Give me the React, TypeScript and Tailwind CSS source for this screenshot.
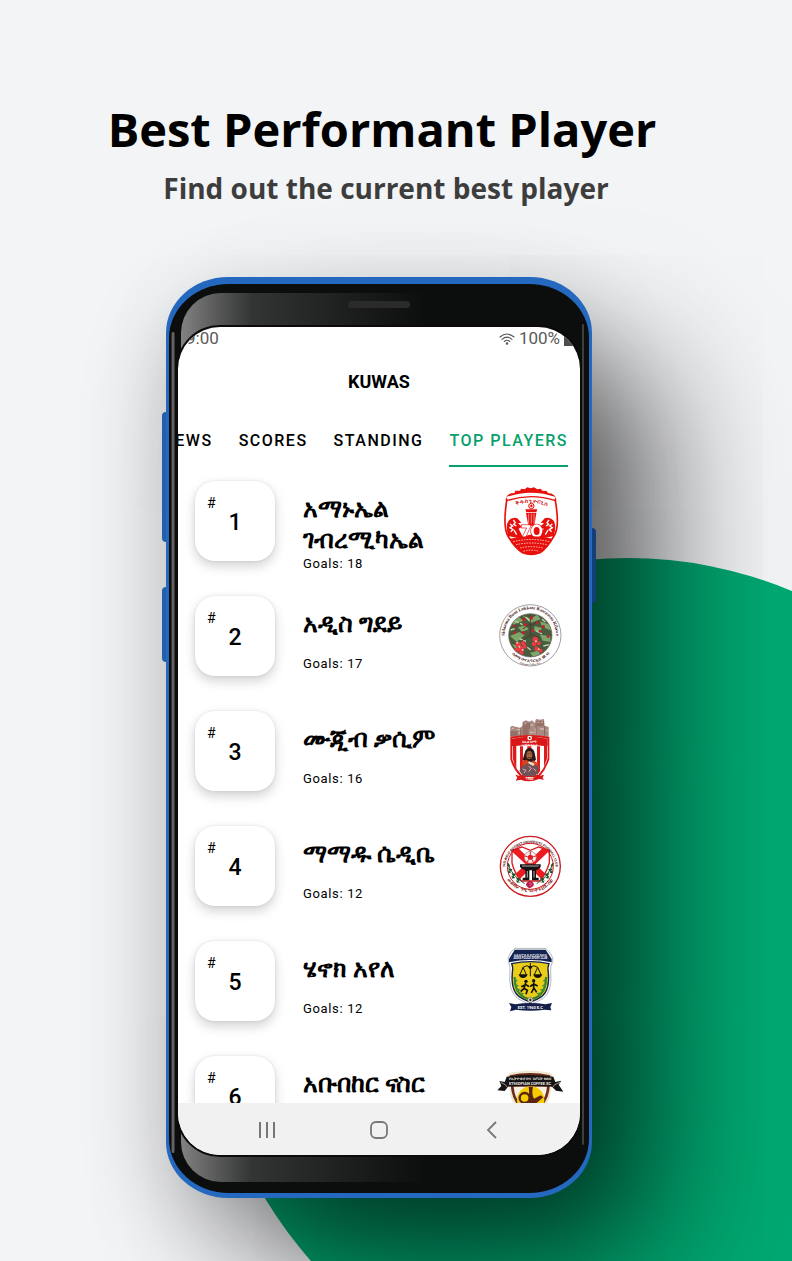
import type { ReactNode } from "react";

type Player = { rank: number; name: string; goals: number; crest: ReactNode };

function GiorgisCrest() {
  return (
    <svg viewBox="24 33 192 216" className="h-[72px] w-16" role="img" aria-label="Club crest">
      <path d="M50 80 Q48 68 60 62 Q123 48 185 62 Q198 68 196 80 Q210 160 192 186 Q170 224 150 236 Q123 246 98 236 Q74 222 54 186 Q38 160 50 80Z" fill="#fff" stroke="#e8100c" strokeWidth="5" />
      <path d="M50 73 L64 58 L72 60 L76 50 L90 50 L94 44 L104 46 L112 40 L122 43 L132 40 L142 46 L152 44 L157 50 L170 51 L176 60 L184 59 L196 73 Q123 48 50 73Z" fill="#e8100c" />
      <path d="M50 72 Q123 46 196 72" fill="none" stroke="#fff" strokeWidth="6" />
      <path d="M50 80 Q123 56 196 80" fill="none" stroke="#e8100c" strokeWidth="4" />
      <path id="giorgis-arc" d="M62 102 Q123 70 188 104" fill="none" />
      <text fill="#d01010" fontSize="17" fontWeight="700" fontFamily="Noto Sans, sans-serif">
        <textPath href="#giorgis-arc" startOffset="50%" textAnchor="middle">ቅዱስ ጊዮርጊስ</textPath>
      </text>
      <circle cx="124" cy="96" r="8" fill="#fff" stroke="#e8100c" strokeWidth="3" />
      <path d="M124 91 l4 4 -2 5 h-4 l-2 -5z" fill="#e8100c" />
      <path d="M106 106 h36 l-3 9 h-30z M108 117 h31 l-6 38 h-18z" fill="#e8100c" />
      <path d="M116 119 v30 M124 119 v30 M132 119 v30" stroke="#fff" strokeWidth="1.5" />
      <path d="M54 186 Q46 152 56 140 Q66 128 82 133 L94 146 L84 148 L96 158 L86 164 L102 196 Z M192 186 Q200 152 191 140 Q180 128 164 133 L152 146 L162 148 L150 158 L161 164 L146 196Z" fill="#e8100c" />
      <path d="M60 150 l8 6 -8 5 9 6 -7 6 M70 138 l6 8 -5 5 8 5 M187 150 l-8 6 8 5 -9 6 7 6 M177 138 l-6 8 5 5 -8 5 M72 168 l8 14 M174 168 l-8 14" fill="none" stroke="#fff" strokeWidth="4" />
      <path d="M92 196 Q124 168 156 196Z" fill="#e8100c" />
      <path d="M94 152 H121 V160 L107 190 H96 L110 162 H94Z" fill="#fff" stroke="#e8100c" strokeWidth="2" />
      <ellipse cx="140" cy="171" rx="13" ry="16" fill="none" stroke="#e8100c" strokeWidth="12" />
      <ellipse cx="140" cy="171" rx="13" ry="16" fill="#e8100c" stroke="#fff" strokeWidth="8" />
      <path d="M60 194 Q123 180 188 194 Q176 216 150 236 Q123 246 98 236 Q72 218 60 194Z" fill="#e8100c" />
      <path d="M70 203 Q123 190 178 203 M78 212 Q123 202 170 212 M90 222 Q123 214 158 222 M100 232 Q123 225 148 232" fill="none" stroke="#fff" strokeWidth="2" strokeDasharray="5 3" />
    </svg>
  );
}

function SidamaCrest() {
  return (
    <svg viewBox="24 18 192 216" className="h-[72px] w-16" role="img" aria-label="Club crest">
      <defs>
        <clipPath id="sidama-clip"><circle cx="121" cy="124" r="65" /></clipPath>
        <path id="sidama-top" d="M46 140 A77 77 0 1 1 196 140" />
        <path id="sidama-bottom" d="M43 138 A79 79 0 0 0 199 138" />
        <path id="sidama-low" d="M63 193 A90 90 0 0 0 179 193" />
      </defs>
      <circle cx="121" cy="124" r="92" fill="#fff" stroke="#8d8d8d" strokeWidth="2.5" />
      <g clipPath="url(#sidama-clip)">
        <rect x="50" y="55" width="142" height="142" fill="#4a5a3e" />
        <path d="M58 82 l28 -14 14 12 -30 12z M96 64 l26 10 20 -12 10 14 -30 10z M150 82 l30 10 4 18 -28 -12z M60 126 l28 -12 16 10 -24 20z M150 122 l30 4 2 18 -24 -4z M84 100 l22 -6 10 12 -20 8z M134 96 l22 6 -8 14 -16 -6z M120 176 l24 -6 8 14 -20 8z M66 150 l20 6 -10 8z" fill="#7fa66a" />
        <path d="M68 78 l18 8 M108 70 l12 12 M138 110 l18 10 M88 134 l20 8 M160 156 l18 -4 M62 108 l12 -4 M156 76 l10 8 M112 160 l10 8 M162 176 l8 -8 M90 88 l8 4" stroke="#bcd6ae" strokeWidth="4" />
        <path d="M121 62 v70 M121 90 l-22 14 M121 96 l26 -14 M121 120 l28 12 M118 124 l-24 18" stroke="#4a3c2c" strokeWidth="3" fill="none" />
        <g fill="#c4202c">
          <circle cx="102" cy="76" r="5" /><circle cx="124" cy="72" r="5" /><circle cx="106" cy="92" r="5" /><circle cx="142" cy="86" r="4" />
          <circle cx="160" cy="98" r="5" /><circle cx="74" cy="116" r="4" /><circle cx="100" cy="116" r="5" /><circle cx="150" cy="112" r="4" />
          <circle cx="174" cy="128" r="4" /><circle cx="72" cy="96" r="4" /><circle cx="128" cy="110" r="4" />
        </g>
        <g fill="#ec3a44">
          <circle cx="84" cy="152" r="8" /><circle cx="100" cy="148" r="7" /><circle cx="92" cy="164" r="8" /><circle cx="80" cy="168" r="7" />
          <circle cx="104" cy="158" r="6" /><circle cx="94" cy="176" r="7" /><circle cx="136" cy="136" r="8" /><circle cx="132" cy="150" r="7" />
          <circle cx="146" cy="148" r="6" /><circle cx="140" cy="164" r="7" /><circle cx="152" cy="170" r="6" />
        </g>
        <g fill="#ffc09c">
          <circle cx="88" cy="158" r="3" /><circle cx="98" cy="168" r="3" /><circle cx="82" cy="146" r="3" /><circle cx="138" cy="142" r="3" /><circle cx="146" cy="166" r="3" />
        </g>
      </g>
      <circle cx="121" cy="124" r="65" fill="none" stroke="#6d6259" strokeWidth="2" />
      <g fontFamily="Liberation Serif, serif" fontWeight="700" fill="#4a1716" textAnchor="middle">
        <text fontSize="14"><textPath href="#sidama-top" startOffset="50%">Sidaama Buni Lokkate Kawaasso Kilawe</textPath></text>
        <text fontSize="13" fontFamily="Noto Sans, sans-serif"><textPath href="#sidama-bottom" startOffset="50%">ሲዳማ ቡና እግር ኳስ ክለብ</textPath></text>
        <text fontSize="8" fill="#6b4a48"><textPath href="#sidama-low" startOffset="50%">Sidama Coffee F.C</textPath></text>
      </g>
    </svg>
  );
}

function FasilCrest() {
  return (
    <svg viewBox="24 18 192 216" className="h-[72px] w-16" role="img" aria-label="Club crest">
      <path d="M61 84 V54 L66 50 L80 54 L90 56 L98 50 V38 L108 34 L118 38 L126 34 L134 42 L138 30 L150 32 L162 30 L164 50 L176 54 V84Z" fill="#a98a82" />
      <path d="M61 66 h22 v16 h-22z M98 42 h18 v36 h-18z M140 36 h22 v16 h-22z" fill="#957068" />
      <path d="M66 58 h6 M82 62 h10 M104 44 h4 M122 48 h8 M144 40 h4 M154 40 h4 M150 60 h12 M168 64 h4 M120 70 h10 M136 56 v20 M86 72 h6" stroke="#d4bbb4" strokeWidth="4" />
      <path d="M92 58 v22 M118 40 v20 M138 46 v30 M164 52 v28" stroke="#6f534e" strokeWidth="2" />
      <path d="M61 84 Q120 72 178 84 V150 Q170 178 148 204 H92 Q68 178 61 150Z" fill="#de1717" />
      <path d="M66 89 Q120 78 173 89 V148 Q166 174 145 198 H95 Q73 174 66 148Z" fill="#fff" />
      <path d="M68 89 h11 v90 l-6 -14 -5 -18z M90 112 h9 v84 l-9 -12z M141 112 h9 v74 l-9 14z M162 89 h9 v60 l-9 24z M112 112 h12 v84 h-12z" fill="#e01b1b" />
      <path d="M66 90 Q120 76 173 90 V112 Q120 106 66 112Z" fill="#d81818" />
      <circle cx="119" cy="87" r="7" fill="#fff" /><circle cx="119" cy="87" r="3" fill="#8c1515" />
      <g fill="#fff" fontFamily="Noto Sans, sans-serif" fontWeight="700" textAnchor="middle">
        <text x="119" y="103" fontSize="11">ፋሲል ከነማ</text>
        <text x="119" y="112" fontSize="9">ስፖርት ክለብ</text>
      </g>
      <path d="M104 132 Q106 118 119 117 Q132 118 134 132 L138 152 L130 160 H108 L98 152Z" fill="#2b1713" />
      <ellipse cx="118" cy="138" rx="9" ry="12" fill="#a4623f" />
      <path d="M112 134 h4 M121 134 h4 M114 145 q5 3 9 0" stroke="#30150f" strokeWidth="2" fill="none" />
      <path d="M97 156 l14 -4 8 14 10 -12 14 8 4 14 -50 2z" fill="#d8451c" />
      <path d="M116 156 l18 8 -8 14 -14 -2z" fill="#f4e0c4" />
      <path d="M94 174 l20 -12 14 8 18 -2 -2 24 -10 10 H100 l-12 -16z" fill="#735257" />
      <path d="M98 180 l10 4 -6 8 M116 172 l8 6 -8 10 M130 178 l8 8" stroke="#cdb0ae" strokeWidth="3" fill="none" />
      <path d="M76 197 L92 202 Q118 210 146 202 L162 197 L158 206 L162 212 L147 210 Q118 222 92 212 L77 215 L82 206Z" fill="#db1818" />
      <text x="119" y="214" textAnchor="middle" fill="#fff" fontSize="10" fontWeight="700" fontFamily="Roboto, sans-serif">1960</text>
    </svg>
  );
}

function WelwaloCrest() {
  return (
    <svg viewBox="24 15 192 216" className="h-[72px] w-16" role="img" aria-label="Club crest">
      <defs>
        <path id="wel-top" d="M45 130 A76 76 0 1 1 197 130" />
        <path id="wel-bottom" d="M40 137 A83 83 0 0 0 202 137" />
        <clipPath id="wel-shield"><path d="M66 76 L96 66 L121 76 L146 66 L178 76 V114 Q168 146 150 168 H94 Q74 146 66 114Z" /></clipPath>
      </defs>
      <circle cx="121" cy="124" r="90" fill="#fff" stroke="#c81a20" strokeWidth="4" />
      <circle cx="121" cy="124" r="69" fill="#fff" stroke="#d9161b" strokeWidth="3" />
      <g clipPath="url(#wel-shield)">
        <path d="M62 62 L186 178 M180 62 L58 178" stroke="#ec1c20" strokeWidth="20" />
      </g>
      <path d="M66 76 L96 66 L121 76 L146 66 L178 76 V114 Q168 146 150 168 H94 Q74 146 66 114Z" fill="none" stroke="#dd1a1d" strokeWidth="4" />
      <circle cx="121" cy="97" r="18" fill="#f6eeee" stroke="#a3686a" strokeWidth="2" />
      <path d="M121 88 l9 6 -3 10 h-12 l-3 -10z" fill="#df1c20" />
      <path d="M121 80 v8 M104 93 l8 2 M138 93 l-8 2 M112 112 l3 -8 M130 112 l-3 -8" stroke="#df1c20" strokeWidth="3" />
      <path d="M90 118 H152 V126 Q146 134 138 136 V158 H146 V166 H126 V136 H118 V166 H98 V158 H106 V136 Q94 132 90 126Z" fill="#161313" />
      <path d="M112 138 v20 M132 138 v20 M96 123 h50" stroke="#fff" strokeWidth="2" />
      <path d="M54 114 Q62 150 104 176 M188 114 Q180 150 140 176" fill="none" stroke="#28613a" strokeWidth="3" />
      <path d="M50 114 l10 6 -4 8z M54 130 l14 3 -8 8z M54 136 l10 7 -9 2z M64 145 l15 1 -9 10z M64 152 l13 6 -10 3z M78 160 l14 -1 -7 11z M78 166 l13 6 -10 1z M192 114 l-10 6 4 8z M188 130 l-14 3 8 8z M188 136 l-10 7 9 2z M178 145 l-15 1 9 10z M178 152 l-13 6 10 3z M164 160 l-14 -1 7 11z M164 166 l-13 6 10 1z" fill="#23522f" />
      <path d="M112 172 q8 -10 16 0 q8 8 -2 14 q-8 6 -14 -1 q-8 -6 0 -13z" fill="#ba1a46" />
      <path d="M117 175 q5 -4 8 2 q-2 6 -7 4" stroke="#f08aaa" strokeWidth="2" fill="none" />
      <g fontWeight="700" textAnchor="middle">
        <text fontSize="10" fill="#54100f" fontFamily="Roboto, sans-serif"><textPath href="#wel-top" startOffset="50%">WELWALO ADIGRAT UNIVERSITY FOOTBALL CLUB</textPath></text>
        <text fontSize="15" fill="#8f1717" fontFamily="Noto Sans, sans-serif"><textPath href="#wel-bottom" startOffset="50%">ወልዋሎ ዓዲ ግራት ዩኒቨርሲቲ</textPath></text>
      </g>
    </svg>
  );
}

function PoliceCrest() {
  return (
    <svg viewBox="24 30 192 216" className="h-[72px] w-16" role="img" aria-label="Club crest">
      <path d="M76 40 H164 Q176 44 188 68 V80 Q180 92 182 110 Q188 168 160 190 Q140 202 121 208 Q102 202 82 190 Q54 168 60 110 Q62 92 55 80 V68 Q64 44 76 40Z" fill="#fff" stroke="#8b95a8" strokeWidth="2" />
      <path d="M74 44 H167 L185 72 V82 Q121 68 57 82 V72Z" fill="#142350" />
      <path d="M74 42 H167" stroke="#bfc2c8" strokeWidth="5" />
      <path d="M65 86 Q121 74 177 86 Q172 96 175 112 Q180 164 156 184 Q138 196 121 201 Q104 196 86 184 Q62 164 67 112 Q70 96 65 86Z" fill="#e9cd18" stroke="#14224d" strokeWidth="4" />
      <g fill="#fff" textAnchor="middle" fontWeight="700">
        <text x="121" y="62" fontSize="10" fontFamily="Noto Sans, sans-serif">አዲስ ፖሊስ ስፖርት ክለብ</text>
        <text x="121" y="73" fontSize="8" fontFamily="Roboto, sans-serif">ADDIS POLICE SPORT CLUB</text>
      </g>
      <path d="M121 84 V124 M99 97 Q110 88 121 96 Q132 88 143 97 M99 97 l-9 22 M99 97 l10 22 M143 97 l-10 22 M143 97 l10 22" stroke="#161208" strokeWidth="3" fill="none" />
      <path d="M86 118 H113 Q110 129 99 129 Q88 129 86 118Z M130 118 H157 Q154 129 143 129 Q132 129 130 118Z" fill="#161208" />
      <circle cx="121" cy="97" r="5" fill="#161208" />
      <path d="M74 126 Q74 182 116 192 M168 126 Q168 182 126 192" stroke="#2f7d30" strokeWidth="6" fill="none" />
      <path d="M72 128 l12 10 -10 4z M72 144 l15 8 -12 5z M76 158 l17 6 -13 7z M86 172 l17 3 -12 9z M170 128 l-12 10 10 4z M170 144 l-15 8 12 5z M166 158 l-17 6 13 7z M156 172 l-17 3 12 9z" fill="#3d8f38" />
      <circle cx="108" cy="139" r="5" fill="#141008" /><circle cx="131" cy="137" r="5" fill="#141008" />
      <path d="M107 144 L102 160 L112 166 L108 178 M102 160 L92 170 M106 149 l-12 6 M108 149 l9 6 M131 142 V160 L124 174 M131 158 L140 172 M131 147 l-11 8 M131 147 l12 6" stroke="#141008" strokeWidth="5" fill="none" />
      <circle cx="121" cy="195" r="8" fill="#f5f2e2" stroke="#555" strokeWidth="2" />
      <path d="M121 190 l4 4 -2 5 h-4 l-2 -5z" fill="#222" />
      <path d="M57 204 L76 208 Q121 200 166 208 L186 204 L181 216 L184 226 L164 224 Q121 230 78 224 L60 229 L64 216Z" fill="#14204a" />
      <text x="121" y="222" fontSize="12" textAnchor="middle" fill="#fff" fontWeight="700" fontFamily="Roboto, sans-serif">EST. 1960 E.C</text>
    </svg>
  );
}

function CoffeeCrest() {
  return (
    <svg viewBox="84 30 192 216" className="h-[72px] w-16 overflow-visible" role="img" aria-label="Club crest">
      <path d="M114 74 Q120 64 138 66 Q180 58 224 66 Q240 64 247 74 L244 120 Q236 180 180 200 Q124 180 119 120Z" fill="#f0e6cf" />
      <path d="M119 76 Q180 62 241 76 L238 120 Q230 172 180 192 Q132 172 124 120Z" fill="#6b2c1c" />
      <path d="M131 110 H231 Q226 164 180 182 Q136 164 131 110Z" fill="#f6efe2" />
      <circle cx="182" cy="150" r="41" fill="#f5cd00" />
      <path d="M176 110 h13 Q184 134 192 146 L212 136 L220 142 Q196 162 186 172 H172 Q180 140 176 110Z" fill="#5a2413" />
      <circle cx="164" cy="144" r="15" fill="none" stroke="#5a2413" strokeWidth="7" />
      <path d="M88 93 L104 96 L110 80 Q180 70 250 80 L256 96 L274 92 L266 104 L280 125 L258 122 L246 110 Q180 104 114 110 L104 123 L82 121 L94 108Z" fill="#151313" />
      <path d="M92 97 l14 7 6 8 M270 97 l-16 7 -6 8" stroke="#dfd9cd" strokeWidth="2" fill="none" />
      <g textAnchor="middle" fontWeight="700" fill="#f2ede4">
        <text x="180" y="91" fontSize="12" fontFamily="Noto Sans, sans-serif">የኢትዮጵያ ቡና ስፖርት ክለብ</text>
        <text x="180" y="104" fontSize="12" fontFamily="Roboto, sans-serif">ETHIOPIAN COFFEE SC</text>
      </g>
    </svg>
  );
}

const players: Player[] = [
  { rank: 1, name: "አማኑኤል ገብረሚካኤል", goals: 18, crest: <GiorgisCrest /> },
  { rank: 2, name: "አዲስ ግደይ", goals: 17, crest: <SidamaCrest /> },
  { rank: 3, name: "ሙጂብ ቃሲም", goals: 16, crest: <FasilCrest /> },
  { rank: 4, name: "ማማዱ ሴዲቤ", goals: 12, crest: <WelwaloCrest /> },
  { rank: 5, name: "ሄኖክ አየለ", goals: 12, crest: <PoliceCrest /> },
  { rank: 6, name: "አቡበከር ናስር", goals: 11, crest: <CoffeeCrest /> },
];

const tabs = ["NEWS", "SCORES", "STANDING", "TOP PLAYERS"];

function StatusBar() {
  return (
    <div className="flex h-6 items-center justify-between pl-2 text-[17px] text-[#5a5a5a]">
      <span>9:00</span>
      <span className="flex items-center gap-1">
        <svg viewBox="0 0 16 12" className="h-3 w-4" fill="none" stroke="#555" strokeWidth="1.1" strokeLinecap="round" aria-hidden="true">
          <path d="M1 4 Q8 -2 15 4 M3 6.3 Q8 2 13 6.3 M5.3 8.5 Q8 6 10.7 8.5" />
          <circle cx="8" cy="10.6" r="0.7" fill="#555" />
        </svg>
        <span>100%</span>
        <span className="h-[13px] w-4 bg-[#4d4d4d]" />
      </span>
    </div>
  );
}

function PlayerRow({ player }: { player: Player }) {
  return (
    <li className="flex h-[115px] items-start pr-[18px] pl-[17px]">
      <div className="relative flex size-20 shrink-0 items-center justify-center rounded-[20px] bg-white shadow-[0_5px_12px_rgba(0,0,0,0.18),0_0_3px_rgba(0,0,0,0.1)]">
        <span className="absolute top-3 left-3 text-sm leading-5">#</span>
        <span className="pt-1 text-[23px] font-medium">{player.rank}</span>
      </div>
      <div className="ml-7 flex-1 pt-3">
        <h2 className="min-h-[47px] w-40 text-[25px] leading-[31px] font-bold">{player.name}</h2>
        <p className="text-[13px] leading-[18px] tracking-wider">Goals: {player.goals}</p>
      </div>
      <div className="shrink-0 pt-1">{player.crest}</div>
    </li>
  );
}

function NavigationBar() {
  return (
    <nav aria-label="System" className="flex h-[52px] items-center justify-around bg-[#f1f1f1] pt-0.5 pr-8 pl-[33px] text-[#777]">
      <button type="button" aria-label="Recent apps" className="flex size-6 items-center justify-center">
        <svg viewBox="0 0 18 18" className="size-[18px]" stroke="currentColor" strokeWidth="2"><path d="M2 1v16M9 1v16M16 1v16" /></svg>
      </button>
      <button type="button" aria-label="Home" className="flex size-6 items-center justify-center">
        <svg viewBox="0 0 18 18" className="size-[18px]" fill="none" stroke="currentColor" strokeWidth="1.8"><rect x="1" y="1" width="16" height="16" rx="5" /></svg>
      </button>
      <button type="button" aria-label="Back" className="flex size-6 items-center justify-center">
        <svg viewBox="0 0 18 18" className="size-[18px]" fill="none" stroke="currentColor" strokeWidth="1.8"><path d="M13 1 L5 9 L13 17" /></svg>
      </button>
    </nav>
  );
}

function Phone() {
  return (
    <div className="relative w-full max-w-[426px] rounded-[62px/56px] bg-[#2469bf] px-[3px] pt-[7px] pb-[5px] shadow-[80px_75px_140px_-15px_rgba(0,0,0,0.62),0_30px_90px_-5px_rgba(0,0,0,0.24)]">
      <span className="absolute top-[135px] -left-1 h-[130px] w-1 rounded-l-sm bg-[#2360ab]" />
      <span className="absolute top-[310px] -left-1 h-[75px] w-1 rounded-l-sm bg-[#2360ab]" />
      <span className="absolute top-[251px] -right-1 h-[75px] w-1 rounded-r-sm bg-[#153f7a]" />
      <div className="relative rounded-[60px/54px] bg-[#0c0e0e] px-[9px] pt-[43px] pb-[38px]">
        <span className="absolute top-12 bottom-10 left-[2px] w-1 rounded-full bg-linear-to-r from-[#1d1b1a] via-[#807b79] to-[#24201f]" />
        <span className="absolute top-10 right-[5px] bottom-12 w-[2px] rounded-full bg-[#3d3f3f]" />
        <span className="absolute inset-x-3 top-[9px] h-20 rounded-t-[40px] bg-linear-to-r from-[#828282] via-[#333434] via-18% to-[#0c0e0e] to-62%" />
        <span className="absolute inset-x-3 bottom-[11px] h-20 rounded-b-[40px] bg-linear-to-r from-[#828282] via-[#333434] via-18% to-[#0c0e0e] to-62%" />
        <span className="absolute top-[17px] left-1/2 h-[7px] w-[62px] -translate-x-1/2 rounded-full bg-[#2b2b2b]" />
        <div className="relative overflow-hidden rounded-[42px] bg-white font-['Roboto','Noto_Sans',sans-serif] text-black shadow-[0_0_0_2px_#0c0a0b]">
          <StatusBar />
          <h1 className="mt-[17px] text-center text-lg leading-7 font-bold">KUWAS</h1>
          <nav aria-label="Sections" className="mt-[31px] flex justify-end gap-[26px] overflow-hidden pr-3 text-base font-medium tracking-[1.5px]">
            {tabs.map((tab) => (
              <a
                key={tab}
                href="#top-players"
                className={
                  tab === "TOP PLAYERS"
                    ? "h-10 shrink-0 border-b-2 border-[#06a16c] leading-[27px] text-[#06a16c]"
                    : "h-10 shrink-0 leading-[27px]"
                }
              >
                {tab}
              </a>
            ))}
          </nav>
          <ul id="top-players" className="h-[636px] overflow-hidden pt-3.5">
            {players.map((player) => (
              <PlayerRow key={player.rank} player={player} />
            ))}
          </ul>
          <NavigationBar />
        </div>
      </div>
    </div>
  );
}

export default function App() {
  return (
    <main className="relative isolate min-h-screen overflow-hidden bg-[#f3f4f6] pb-[63px] font-['Open_Sans','Noto_Sans',sans-serif]">
      <span className="absolute top-[558px] left-[205px] -z-10 size-[846px] rounded-full bg-[#00a871]" />
      <header className="pt-[94px] pr-7 text-center">
        <p className="text-[47px] leading-[70px] font-bold text-black">Best Performant Player</p>
        <p className="pl-2 text-[28px] leading-[48px] font-bold text-[#3d3d3d]">Find out the current best player</p>
      </header>
      <div className="mt-[65px] flex justify-center pr-[34px]">
        <Phone />
      </div>
    </main>
  );
}
